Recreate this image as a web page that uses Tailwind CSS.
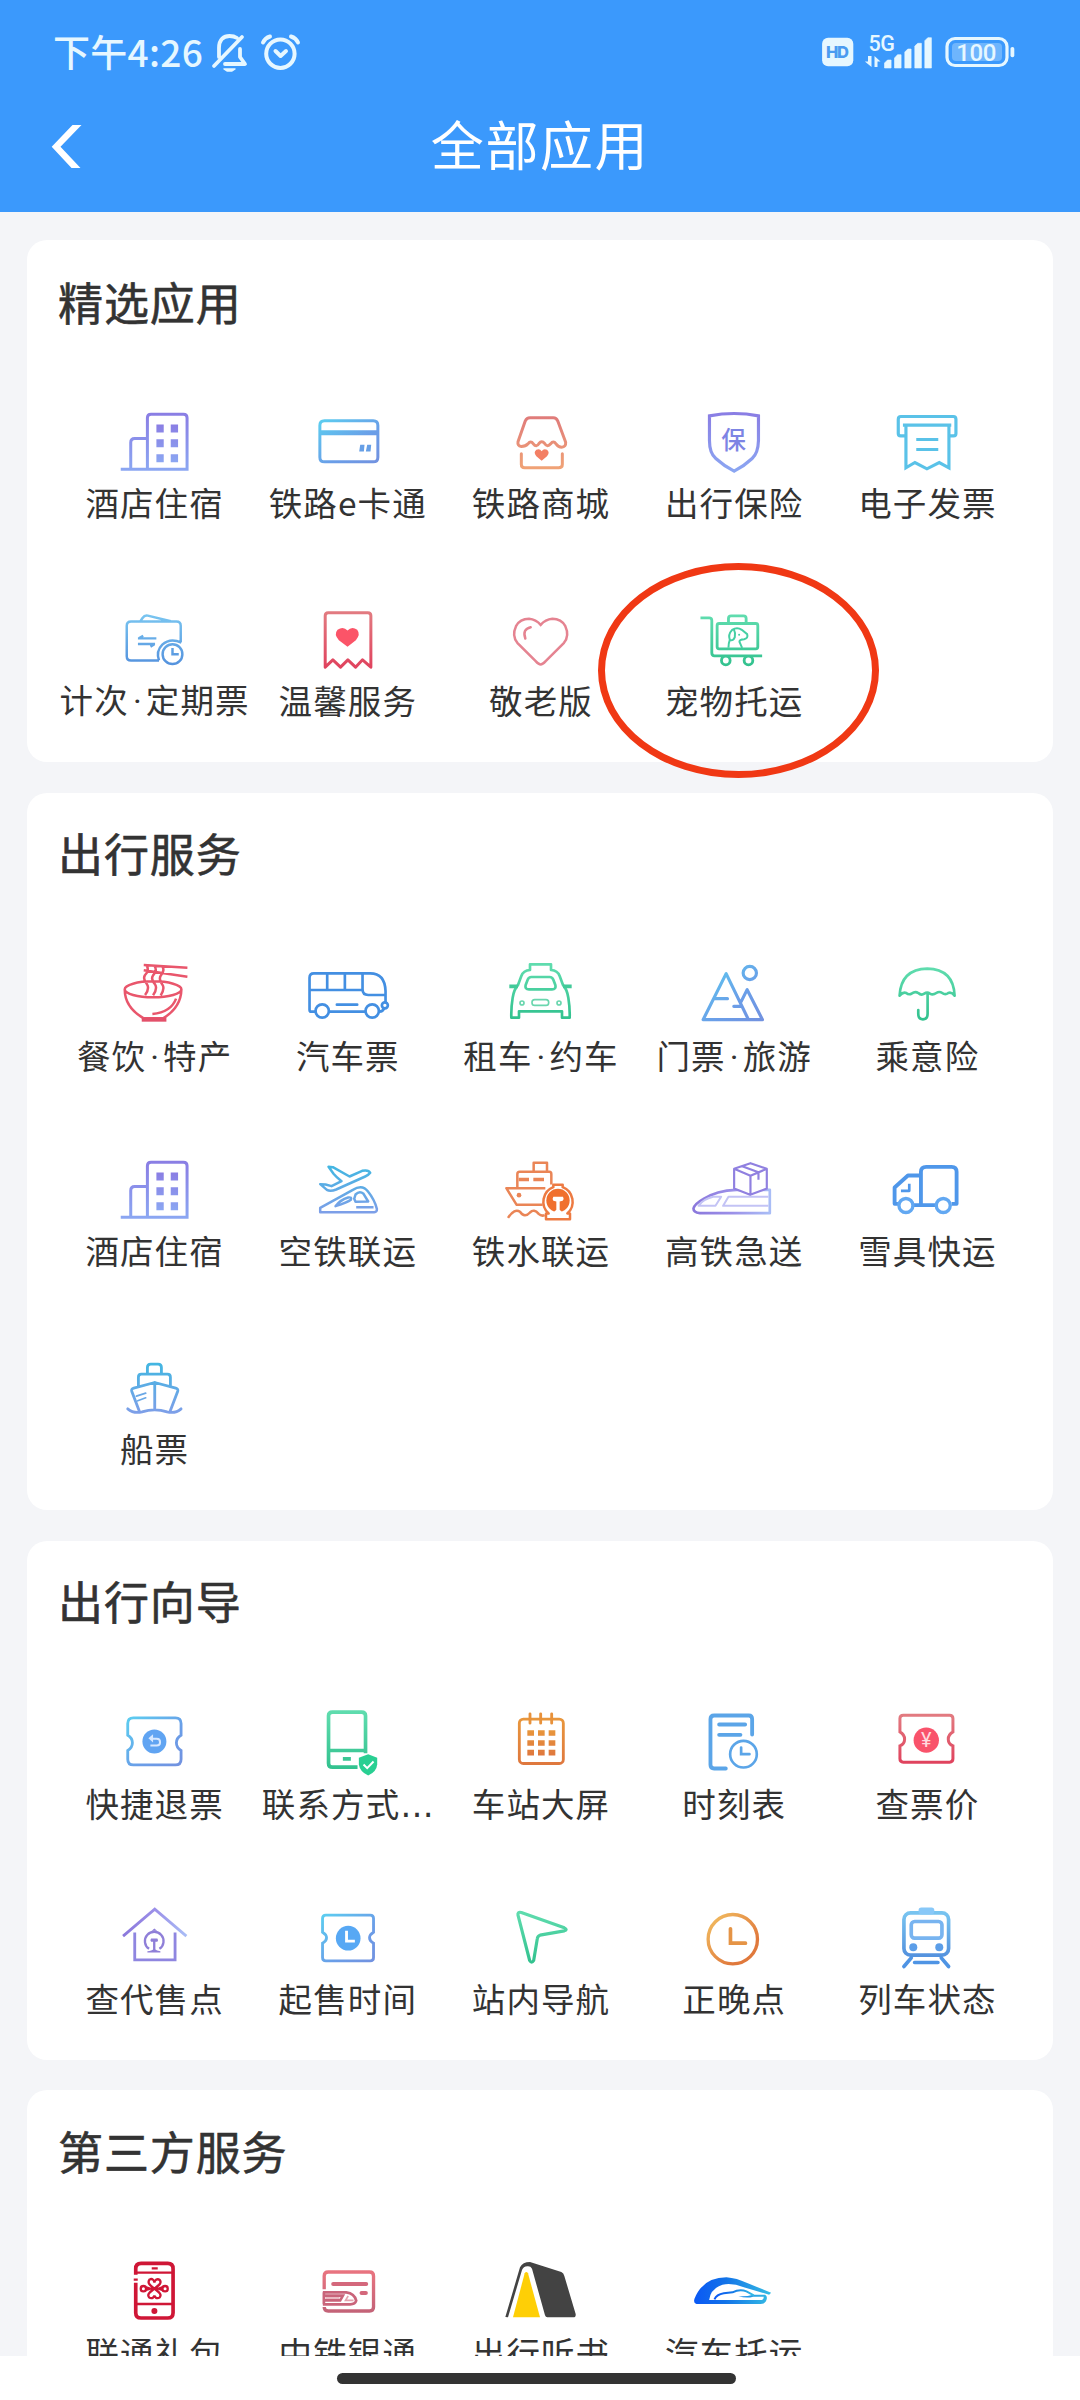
<!DOCTYPE html>
<html lang="zh-CN">
<head>
<meta charset="utf-8">
<title>全部应用</title>
<script src="https://cdn.jsdelivr.net/npm/@tailwindcss/browser@4"></script>
</head>
<body class="relative h-[2400px] w-[1080px] overflow-hidden bg-white font-['Noto_Sans_CJK_SC',sans-serif] text-[#333]">

<!-- shared gradients -->
<svg class="absolute h-0 w-0" aria-hidden="true">
  <defs>
    <linearGradient id="purple" x1="0" y1="0" x2="0" y2="1"><stop stop-color="#8a7ee4"/><stop offset="1" stop-color="#8ba6f2"/></linearGradient>
    <linearGradient id="purpleH"><stop stop-color="#8b78dc"/><stop offset=".5" stop-color="#9b8fe8"/><stop offset="1" stop-color="#a9bdf6"/></linearGradient>
    <linearGradient id="cyan" x1="0" y1="0" x2="1" y2="1"><stop stop-color="#5ccdf0"/><stop offset=".6" stop-color="#6a9ee8"/><stop offset="1" stop-color="#7292e0"/></linearGradient>
    <linearGradient id="sky" x1="0" y1="0" x2="0" y2="1"><stop stop-color="#43b6e2"/><stop offset="1" stop-color="#7d9fe8"/></linearGradient>
    <linearGradient id="blue" x1="0" y1="0" x2="0" y2="1"><stop stop-color="#78c4f0"/><stop offset="1" stop-color="#5593de"/></linearGradient>
    <linearGradient id="peach" x1="0" y1="0" x2="0" y2="1"><stop stop-color="#e07c7a"/><stop offset="1" stop-color="#f0a276"/></linearGradient>
    <linearGradient id="red" x1="0" y1="0" x2="0" y2="1"><stop stop-color="#e27a80"/><stop offset="1" stop-color="#e0435e"/></linearGradient>
    <linearGradient id="green" x1="0" y1="0" x2="0" y2="1"><stop stop-color="#5fdcae"/><stop offset="1" stop-color="#33c28f"/></linearGradient>
    <linearGradient id="orange" x1="0" y1="0" x2="0" y2="1"><stop stop-color="#e8963c"/><stop offset="1" stop-color="#df783e"/></linearGradient>
    <linearGradient id="amber" x1="0" y1="0" x2="1" y2="1"><stop stop-color="#f2c062"/><stop offset=".75" stop-color="#e0793c"/></linearGradient>
    <linearGradient id="rose" x1="0" y1="0" x2="0" y2="1"><stop stop-color="#e87480"/><stop offset="1" stop-color="#c46378"/></linearGradient>
    <linearGradient id="ocean"><stop stop-color="#0a58f5"/><stop offset=".4" stop-color="#1272e8"/><stop offset="1" stop-color="#35bde4"/></linearGradient>
  </defs>
</svg>

<header class="h-[212px] bg-[#3b99fc] text-white">
  <div class="flex h-[104px] items-center justify-between pl-[53px] pr-[64px] text-[#e6f7ff]">
    <div class="flex items-center">
      <span class="-mt-[3px] w-[150px] whitespace-nowrap text-[37px] font-medium leading-[40px] tracking-[.3px]">下午4:26</span>
      <svg class="mt-[1px] h-[40px] w-[100px]" viewBox="203 33 100 40" fill="none" stroke="#e6f7ff" stroke-width="3.8" stroke-linecap="round" stroke-linejoin="round">
        <path d="M214 66L242 37M219 57V48C219 39 224 36 229.500 36Q234 36 237 38M240 49V57L245 64H225"/><path d="M224 69H235L232 71H227Z" stroke-width="1.500" fill="#e6f7ff"/>
        <circle cx="280.400" cy="53.700" r="14.200" stroke-width="4"/><path d="M275.500 51L280.600 56L286 51M263 42.500Q265 38 270 36.500M291 36.500Q296 38 298 42.500" stroke-width="4"/>
      </svg>
    </div>
    <svg class="h-[40px] w-[194px]" viewBox="822.500 32 194 40" fill="#e6f7ff">
      <rect x="822.600" y="37.700" width="31.200" height="28.600" rx="6"/>
      <text x="838" y="58" text-anchor="middle" font-family="Inter" font-weight="800" font-size="16.500" textLength="23" fill="#4b9bf0">HD</text>
      <text x="869" y="50.500" font-family="Roboto" font-size="21.500" font-weight="500" textLength="26.500">5G</text>
      <path d="M868.500 56H872V67L865.400 61.500H868.500ZM875 56L881 61.500H878V67H875Z"/>
      <path d="M885 63L888 60H891.600V68H885ZM895 58L898 54.700H901.600V68H895ZM905.300 52L908.300 49H911.600V68H905.300ZM915.300 46L918.300 43.300H921.900V68H915.300ZM925.300 40.700L928.300 37.700H931.900V68H925.300Z" stroke="#e6f7ff" stroke-width=".6" stroke-linejoin="round"/>
      <rect x="947.500" y="38.500" width="60" height="27" rx="8" fill="none" stroke="#e6f7ff" stroke-width="3.200"/>
      <rect x="952.500" y="43" width="50" height="18" rx="4" fill-opacity=".3"/>
      <rect x="1011" y="47" width="3.800" height="10.300" rx="1.800"/>
      <text x="976.800" y="60.800" text-anchor="middle" font-family="Roboto" font-size="24" font-weight="500" textLength="40">100</text>
    </svg>
  </div>
  <div class="grid h-[84px] grid-cols-[120px_1fr_120px] items-center">
    <svg class="ml-[50px] h-[44px] w-[34px]" viewBox="50 124 34 44"><path d="M72.500 125H81.500L60.500 146.700L80.500 168H71.500L51.700 146.700Z" fill="#fff"/></svg>
    <h1 class="-mt-[6px] text-center text-[53px] leading-[60px] tracking-[1.600px]">全部应用</h1>
  </div>
</header>

<main class="flex h-[2144px] flex-col overflow-hidden bg-[#f4f5f8] px-[27px] pt-[28px]">

  <section class="mb-[31px] h-[522px] shrink-0 rounded-[20px] bg-white px-[30px] pt-[30px]">
    <h2 class="mb-[70px] h-[64px] pl-[1px] text-[45px] leading-[64px] tracking-[.9px] [-webkit-text-stroke:0.6px_#333]">精选应用</h2>
    <ul class="grid grid-cols-5 grid-rows-[198px_120px] text-[33.500px] leading-[40px] tracking-[1.100px] whitespace-nowrap">
      <li class="flex flex-col items-center"><svg class="h-[80px] w-[100px]" viewBox="190.800 40.500 300 240" fill="none" stroke="url(#purple)" stroke-width="9"><path d="M241 236H440V82Q440 71 429 71H332Q321 71 321 82V236M321 144H283Q271 144 271 156V232"/><path stroke="none" fill="url(#purple)" d="M348 102h22v24h-22zM391 102h22v24h-22zM348 146h22v24h-22zM391 146h22v24h-22zM348 191h22v24h-22zM391 191h22v24h-22z"/></svg><span class="-mt-[2px] pl-[2px]">酒店住宿</span></li>
      <li class="flex flex-col items-center"><svg class="h-[80px] w-[100px]" viewBox="770.400 40.500 300 240" fill="none" stroke="url(#cyan)" stroke-width="9"><path d="M853 91H999Q1013 91 1013 105V200Q1013 214 999 214H853Q839 214 839 200V105Q839 91 853 91ZM839 124H1013M839 130H1013"/><path stroke="none" fill="#669fe6" d="M960 163h13l-2 20h-14zM981 163h12l-2 20h-14z"/></svg><span class="-mt-[2px] pl-[2px]">铁路e卡通</span></li>
      <li class="flex flex-col items-center"><svg class="h-[80px] w-[100px]" viewBox="1350 40.500 300 240" fill="none" stroke="url(#peach)" stroke-width="9" stroke-linejoin="round" stroke-linecap="round"><path d="M1470 82H1540Q1549 82 1553 91L1577 155Q1578 170 1565 170Q1555 170 1548 160Q1540 149 1532 160Q1522 172 1514 159Q1505 149 1497 159Q1489 172 1480 160Q1472 149 1464 160Q1457 168 1444 168Q1432 166 1434 154L1456 91Q1460 82 1470 82ZM1444 190V222Q1444 232 1454 232H1556Q1567 232 1567 222V190"/><path stroke="none" fill="#f37f64" d="M1505 211L1489 197Q1479 186 1489 178Q1499 173 1505 182Q1511 173 1521 178Q1531 186 1521 197Z"/></svg><span class="-mt-[2px] pl-[2px]">铁路商城</span></li>
      <li class="flex flex-col items-center"><svg class="h-[80px] w-[100px]" viewBox="429.600 40.500 300 240" fill="none" stroke="url(#purple)" stroke-width="9.500"><path d="M583 69Q546 69 509 76V150Q509 188 528 204Q552 226 583 242Q614 226 637 204Q655 188 656 150V76Q620 69 583 69Z"/><text x="581" y="176" text-anchor="middle" font-size="74" font-weight="500" letter-spacing="0" stroke="none" fill="#7d84e4">保</text></svg><span class="-mt-[2px] pl-[2px]">出行保险</span></li>
      <li class="flex flex-col items-center"><svg class="h-[80px] w-[100px]" viewBox="1009.200 40.500 300 240" fill="none" stroke="#5ac2e8" stroke-width="9.500"><path d="M1097 136H1083Q1076 136 1076 129V86Q1076 78 1084 78H1241Q1249 78 1249 86V129Q1249 136 1242 136H1229M1090 104H1235M1099 104V232L1126 216L1162 235L1199 216L1228 232V104M1130 147H1196M1130 177H1196"/></svg><span class="-mt-[2px] pl-[2px]">电子发票</span></li>

      <li class="flex flex-col items-center"><svg class="h-[80px] w-[100px]" viewBox="190.800 634.500 300 240" fill="none" stroke="url(#blue)" stroke-width="7.500"><path d="M356 812H271Q258 812 258 799V707Q258 694 271 694H409Q422 694 422 707V756M300 692L306 683Q312 674 322 676L392 693M292 745H348M296 744L308 737M292 762H344M342 763L330 770M356 812Q346 784 366 764Q390 742 424 758M427 793A30 30 0 1 1 367 793A30 30 0 1 1 427 793M397 774V793H416"/></svg><span class="-mt-[2px] pl-[2px]">计次<i class="inline-block w-[17px] text-center font-['Roboto'] not-italic tracking-normal">·</i>定期票</span></li>
      <li class="flex flex-col items-center"><svg class="h-[80px] w-[100px]" viewBox="770.400 634.500 300 240" fill="none" stroke="url(#red)" stroke-width="9" stroke-linejoin="round"><path d="M855 830V676Q855 667 864 667H983Q992 667 992 676V830L967 808L946 830L923 808L901 830L878 808Z"/><path stroke="none" fill="#fb5468" d="M922 769L896 749Q880 732 892 718Q909 706 922 720Q935 706 951 718Q962 732 947 749Z"/></svg><span class="-mt-[2px] pl-[2px]">温馨服务</span></li>
      <li class="flex flex-col items-center"><svg class="h-[80px] w-[100px]" viewBox="1350 634.500 300 240" fill="none" stroke="#e58391" stroke-width="7.500" stroke-linecap="round"><path d="M1502 822Q1496 822 1487 812L1432 757Q1415 735 1428 707Q1440 685 1467 685Q1488 687 1502 703Q1516 687 1537 685Q1564 685 1576 707Q1589 735 1572 757L1517 812Q1508 822 1502 822ZM1472 710Q1446 716 1456 744"/></svg><span class="-mt-[2px] pl-[2px]">敬老版</span></li>
      <li class="flex flex-col items-center"><svg class="h-[80px] w-[100px]" viewBox="429.600 634.500 300 240" fill="none" stroke="url(#green)" stroke-width="8.500"><path d="M482 682H508Q516 682 516 690V787Q516 796 524 796H667M538 699H648Q654 699 654 705V769Q654 775 648 775H538Q532 775 532 769V705Q532 699 538 699ZM566 698V684Q566 676 574 676H611Q619 676 619 684V698M571 810A13 13 0 1 1 545 810A13 13 0 1 1 571 810M639 810A13 13 0 1 1 613 810A13 13 0 1 1 639 810"/><path stroke="#45cfa4" stroke-width="6" d="M566 772Q566 758 570 748Q564 732 577 718Q592 708 606 718L622 731Q626 743 613 746Q599 746 599 754L607 772M570 748Q581 752 585 740Q588 728 582 716"/><circle cx="598" cy="733" r="3" fill="#45cfa4" stroke="none"/></svg><span class="-mt-[2px] pl-[2px]">宠物托运</span></li>
    </ul>
  </section>

  <section class="mb-[31px] h-[717px] shrink-0 rounded-[20px] bg-white px-[30px] pt-[28px]">
    <h2 class="mb-[72px] h-[64px] pl-[1px] text-[45px] leading-[64px] tracking-[.9px] [-webkit-text-stroke:0.6px_#333]">出行服务</h2>
    <ul class="grid grid-cols-5 grid-rows-[195px_198px_120px] text-[33.500px] leading-[40px] tracking-[1.100px] whitespace-nowrap">
      <li class="flex flex-col items-center"><svg class="h-[80px] w-[100px]" viewBox="190.800 408 300 240" fill="none" stroke="url(#red)" stroke-width="7.500"><path stroke="#e9566c" d="M253 505A85 24 0 0 1 423 505A85 24 0 0 1 253 505ZM253 505Q253 560 310 592H368Q422 560 423 505M310 432L441 440M310 448L441 467M318 433Q328 447 314 462Q306 474 320 490Q328 503 314 522M342 434Q352 448 338 463Q330 475 344 490Q352 503 338 523M366 436Q374 450 361 464Q354 476 366 491Q374 503 361 523M336 579Q392 574 407 533"/><path stroke="none" fill="#e3506a" d="M304 590H378V602H304Z"/></svg><span class="-mt-[2px] pl-[2px]">餐饮<i class="inline-block w-[17px] text-center font-['Roboto'] not-italic tracking-normal">·</i>特产</span></li>
      <li class="flex flex-col items-center"><svg class="h-[80px] w-[100px]" viewBox="770.400 408 300 240" fill="none" stroke="#438fe2" stroke-width="8" stroke-linecap="round"><path d="M826 572H813Q808 572 808 566V470Q808 457 821 457H990Q1034 457 1036 510V543M1032 562Q1028 572 1018 572M867 572H974M808 507H966M861 457V507M914 457V507M967 457V505Q967 522 984 522H1036M890 551H951"/><circle cx="846" cy="570" r="20"/><circle cx="996" cy="570" r="20"/><circle cx="1034" cy="553" r="9"/></svg><span class="-mt-[2px] pl-[2px]">汽车票</span></li>
      <li class="flex flex-col items-center"><svg class="h-[80px] w-[100px]" viewBox="1350 408 300 240" fill="none" stroke="url(#green)" stroke-width="8" stroke-linejoin="round"><path d="M1470 447V430H1533V447Q1553 448 1559 465L1569 492Q1581 505 1585 530Q1590 560 1589 590H1566V571H1437V590H1414Q1413 560 1418 530Q1422 505 1434 492L1444 465Q1450 448 1470 447ZM1474 468H1529Q1537 468 1540 476L1546 492Q1549 505 1536 505H1467Q1454 505 1457 492L1463 476Q1466 468 1474 468Z"/><path stroke="#41ca99" stroke-width="11" d="M1408 496H1434M1569 496H1595"/><g stroke="#6ad6ae" stroke-width="5"><circle cx="1446" cy="546" r="6"/><circle cx="1557" cy="546" r="6"/><rect x="1476" y="536" width="50" height="17" rx="8"/></g></svg><span class="-mt-[2px] pl-[2px]">租车<i class="inline-block w-[17px] text-center font-['Roboto'] not-italic tracking-normal">·</i>约车</span></li>
      <li class="flex flex-col items-center"><svg class="h-[80px] w-[100px]" viewBox="429.600 48 300 240" fill="none" stroke="url(#cyan)" stroke-width="9.500" stroke-linejoin="round" stroke-linecap="round"><path d="M626 236L559 98L490 236H668L622 146L604 182M526 173H563M582 196H606M650 96A20 20 0 1 1 610 96A20 20 0 1 1 650 96"/></svg><span class="-mt-[2px] pl-[2px]">门票<i class="inline-block w-[17px] text-center font-['Roboto'] not-italic tracking-normal">·</i>旅游</span></li>
      <li class="flex flex-col items-center"><svg class="h-[80px] w-[100px]" viewBox="1009.200 48 300 240" fill="none" stroke="url(#green)" stroke-width="8" stroke-linecap="round" stroke-linejoin="round"><path d="M1080 164Q1084 85 1163 83Q1242 85 1245 164Q1236 152 1226 156Q1217 163 1208 156Q1199 150 1190 156Q1180 163 1171 158Q1163 152 1154 158Q1145 164 1136 156Q1127 150 1117 157Q1108 163 1100 156Q1090 152 1080 164ZM1164 158V218Q1164 235 1150 235Q1136 235 1136 218V207"/></svg><span class="-mt-[2px] pl-[2px]">乘意险</span></li>

      <li class="flex flex-col items-center"><svg class="h-[80px] w-[100px]" viewBox="190.800 40.500 300 240" fill="none" stroke="url(#purple)" stroke-width="9"><path d="M241 236H440V82Q440 71 429 71H332Q321 71 321 82V236M321 144H283Q271 144 271 156V232"/><path stroke="none" fill="url(#purple)" d="M348 102h22v24h-22zM391 102h22v24h-22zM348 146h22v24h-22zM391 146h22v24h-22zM348 191h22v24h-22zM391 191h22v24h-22z"/></svg><span class="-mt-[2px] pl-[2px]">酒店住宿</span></li>
      <li class="flex flex-col items-center"><svg class="h-[80px] w-[100px]" viewBox="770.400 64.500 300 240" fill="none" stroke="url(#sky)" stroke-width="7.500" stroke-linejoin="round"><path d="M865 109L878 110L928 138L966 121Q985 117 990 127Q985 134 975 138L888 177Q870 184 860 178L840 161L856 162L874 167L904 152Q888 140 880 130ZM840 245V232L938 178Q967 160 984 184Q1003 208 1010 235Q1011 245 1002 245ZM942 205L946 192Q958 180 970 190L984 213L946 214ZM886 227Q900 208 924 201Q936 199 932 208Q922 216 886 227ZM948 230H1000"/></svg><span class="-mt-[2px] pl-[2px]">空铁联运</span></li>
      <li class="flex flex-col items-center"><svg class="h-[80px] w-[100px]" viewBox="1350 64.500 300 240" fill="none" stroke="#ea8556" stroke-width="7.500" stroke-linejoin="round"><path d="M1481 123V97H1521V123M1432 170V131Q1432 124 1439 124H1528Q1534 124 1534 131V162M1516 173H1399L1430 223H1508M1404 262Q1424 232 1440 244Q1454 264 1470 246Q1482 234 1496 250Q1504 258 1514 254"/><path stroke-width="10" d="M1436 147H1467M1480 147H1512"/><circle cx="1437" cy="194" r="7" fill="#ea8556" stroke="none"/><path stroke="#ed7a42" fill="#fff" d="M1540 170V163H1568V170A47 47 0 0 1 1582 249H1590V266H1518V249H1526A47 47 0 0 1 1540 170Z"/><circle cx="1554" cy="210" r="35" fill="#f0702e" stroke="none"/><path fill="#fff" stroke="none" d="M1540 199H1569Q1573 205 1568 211L1559 213V238L1570 248V254H1538V248L1549 238V213L1540 211Q1536 205 1540 199Z"/></svg><span class="-mt-[2px] pl-[2px]">铁水联运</span></li>
      <li class="flex flex-col items-center"><svg class="h-[80px] w-[100px]" viewBox="429.600 634.500 300 240" fill="none" stroke="url(#purpleH)" stroke-width="8" stroke-linejoin="round"><path d="M690 748V818H480Q461 816 461 804Q465 790 490 776Q530 750 590 748Z"/><path stroke="#c3c3f5" stroke-width="6" d="M520 769H544L527 796H476Q490 776 520 769ZM686 769H566L550 796H686"/><path stroke="#9080e0" stroke-width="6.500" fill="#fff" d="M632 668L583 685V744L631 763L681 744V685ZM583 685L632 706L681 685M632 706V763M607 677L656 695V718"/></svg><span class="-mt-[2px] pl-[2px]">高铁急送</span></li>
      <li class="flex flex-col items-center"><svg class="h-[80px] w-[100px]" viewBox="1009.200 634.500 300 240" fill="none" stroke="#4f97ea" stroke-width="11.500" stroke-linejoin="round"><path d="M1075 790H1065V741L1105 705H1142M1144 794V694Q1144 679 1160 679H1236Q1251 679 1251 694V790H1236M1123 794H1187"/><path stroke-width="8" d="M1109 730V751H1084"/><circle cx="1099" cy="795" r="21" stroke="#62a8f2" stroke-width="10"/><circle cx="1211" cy="795" r="21" stroke="#62a8f2" stroke-width="10"/></svg><span class="-mt-[2px] pl-[2px]">雪具快运</span></li>

      <li class="flex flex-col items-center"><svg class="h-[80px] w-[100px]" viewBox="190.800 658.500 300 240" fill="none" stroke="url(#sky)" stroke-width="8.500" stroke-linecap="round" stroke-linejoin="round"><path d="M321 728V711Q321 701 331 701H353Q363 701 363 711V728M294 766V740Q294 731 303 731H381Q390 731 390 740V766M296 840L274 782Q272 775 280 773L343 756L406 773Q414 775 412 782L390 840M343 756V838M262 835Q280 850 305 844Q343 832 380 844Q405 850 422 835"/><path stroke="#6aa8e6" stroke-width="5" d="M288 797L316 788M292 811L316 802"/></svg><span class="-mt-[2px] pl-[2px]">船票</span></li>
    </ul>
  </section>

  <section class="mb-[30px] h-[519px] shrink-0 rounded-[20px] bg-white px-[30px] pt-[28px]">
    <h2 class="mb-[72px] h-[64px] pl-[1px] text-[45px] leading-[64px] tracking-[.9px] [-webkit-text-stroke:0.6px_#333]">出行向导</h2>
    <ul class="grid grid-cols-5 grid-rows-[195px_120px] text-[33.500px] leading-[40px] tracking-[1.100px] whitespace-nowrap">
      <li class="flex flex-col items-center"><svg class="h-[80px] w-[100px]" viewBox="190.800 433.500 300 240" fill="none" stroke="url(#cyan)" stroke-width="8.500"><path d="M279 472H405Q422 472 422 489V524Q408 532 408 547Q408 562 422 570V596Q422 613 405 613H279Q262 613 262 596V570Q276 562 276 547Q276 532 262 524V489Q262 472 279 472Z"/><circle cx="342" cy="543" r="36" fill="#60a4f2" stroke="none"/><path stroke="#d6e8ff" stroke-width="6" d="M330 535H349Q359 535 359 545T349 555H330"/><path fill="#d6e8ff" stroke="none" d="M338 521V546L324 533Z"/></svg><span class="-mt-[2px] pl-[2px]">快捷退票</span></li>
      <li class="flex flex-col items-center"><svg class="h-[80px] w-[100px]" viewBox="770.400 433.500 300 240" fill="none" stroke="url(#green)" stroke-width="11"><path d="M952 620H877Q865 620 865 608V466Q865 455 877 455H964Q976 455 976 466V578M865 570H976M908 595H932"/><path stroke="none" fill="#29cf92" d="M984 581L1011 592V612Q1009 634 984 645Q959 634 956 612V592Z"/><path stroke="#fff" stroke-width="6" d="M970 612L981 623L1000 603"/></svg><span class="-mt-[2px] pl-[2px]">联系方式<i class="font-['DejaVu_Sans'] not-italic tracking-normal">…</i></span></li>
      <li class="flex flex-col items-center"><svg class="h-[80px] w-[100px]" viewBox="1350 433.500 300 240" fill="none" stroke="url(#orange)" stroke-width="8.500"><rect x="1438" y="476" width="132" height="133" rx="12"/><path stroke="#e8913a" stroke-linecap="round" d="M1470 460V488M1502 460V488M1535 460V488"/><path stroke="none" fill="url(#orange)" d="M1462 509h20v17h-20zM1494 509h20v17h-20zM1526 509h20v17h-20zM1462 539h20v17h-20zM1494 539h20v17h-20zM1526 539h20v17h-20zM1462 568h20v17h-20zM1494 568h20v17h-20zM1526 568h20v17h-20z"/></svg><span class="-mt-[2px] pl-[2px]">车站大屏</span></li>
      <li class="flex flex-col items-center"><svg class="h-[80px] w-[100px]" viewBox="429.600 43.500 300 240" fill="none" stroke="#5ba5e8" stroke-width="11.500" stroke-linecap="round"><path d="M558 234H523Q512 234 512 223V86Q512 75 523 75H627Q637 75 637 86V132M538 102H616M538 133H602"/><path stroke-width="8" d="M651 191A40 40 0 1 1 571 191A40 40 0 1 1 651 191M604 171V191H629"/></svg><span class="-mt-[2px] pl-[2px]">时刻表</span></li>
      <li class="flex flex-col items-center"><svg class="h-[80px] w-[100px]" viewBox="1009.200 43.500 300 240" fill="none" stroke="url(#red)" stroke-width="9"><path d="M1091 74H1230Q1240 74 1240 84V124Q1226 132 1226 146Q1226 160 1240 166V205Q1240 215 1230 215H1091Q1081 215 1081 205V166Q1095 160 1095 146Q1095 132 1081 124V84Q1081 74 1091 74Z"/><circle cx="1160" cy="149" r="38" fill="#f9536b" stroke="none"/><text x="1160" y="170" text-anchor="middle" font-family="Roboto" font-size="60" letter-spacing="0" stroke="none" fill="#ffd9de">¥</text></svg><span class="-mt-[2px] pl-[2px]">查票价</span></li>

      <li class="flex flex-col items-center"><svg class="h-[80px] w-[100px]" viewBox="190.800 58.500 300 240" fill="none" stroke="url(#purpleH)" stroke-width="8.500"><path d="M248 167L343 86L438 167"/><path stroke="#8f86e0" d="M283 156V238H404V156"/><path stroke="#8f7fd8" stroke-width="7" d="M326 205A28 28 0 1 1 357 205"/><path fill="#8f7fd8" stroke="none" d="M332 174H351Q355 179 351 184H345V207Q348 211 360 212V216H321V212Q335 211 338 207V184H332Q328 179 332 174ZM334 151L342 144L350 151Z"/></svg><span class="-mt-[2px] pl-[2px]">查代售点</span></li>
      <li class="flex flex-col items-center"><svg class="h-[80px] w-[100px]" viewBox="770.400 58.500 300 240" fill="none" stroke="url(#cyan)" stroke-width="8.500"><path d="M857 104H990Q1000 104 1000 114V155Q988 162 988 172Q988 182 1000 188V231Q1000 241 990 241H857Q847 241 847 231V188Q859 182 859 172Q859 162 847 155V114Q847 104 857 104Z"/><circle cx="924" cy="173" r="37" fill="#57a8f4" stroke="none"/><path stroke="#fff" d="M919 151V182H944"/></svg><span class="-mt-[2px] pl-[2px]">起售时间</span></li>
      <li class="flex flex-col items-center"><svg class="h-[80px] w-[100px]" viewBox="1350 58.500 300 240" fill="none" stroke="url(#green)" stroke-width="9.500" stroke-linejoin="round"><path d="M1434 104Q1432 93 1444 96L1573 142Q1584 147 1573 151L1500 164Q1493 166 1492 174L1481 240Q1475 250 1469 240Z"/></svg><span class="-mt-[2px] pl-[2px]">站内导航</span></li>
      <li class="flex flex-col items-center"><svg class="h-[80px] w-[100px]" viewBox="429.600 628.500 300 240" fill="none" stroke="url(#amber)" stroke-width="10"><circle cx="579" cy="746" r="74"/><path stroke="#e59446" stroke-width="11" stroke-linecap="round" d="M572 715V758H617"/></svg><span class="-mt-[2px] pl-[2px]">正晚点</span></li>
      <li class="flex flex-col items-center"><svg class="h-[80px] w-[100px]" viewBox="1009.200 628.500 300 240" fill="none" stroke="url(#blue)" stroke-width="11" stroke-linecap="round"><rect x="1093" y="667" width="134" height="127" rx="20"/><rect x="1137" y="651" width="47" height="20" rx="8" fill="#88c8f8" stroke="none"/><rect x="1115" y="693" width="92" height="50" rx="10" stroke="#78b4f0"/><g fill="#5c9ee8" stroke="none"><circle cx="1121" cy="770" r="12"/><circle cx="1199" cy="770" r="12"/></g><path stroke="#4f94e4" d="M1115 802L1093 828M1205 802L1227 828M1125 816H1195"/></svg><span class="-mt-[2px] pl-[2px]">列车状态</span></li>
    </ul>
  </section>

  <section class="h-[522px] shrink-0 rounded-[20px] bg-white px-[30px] pt-[29px]">
    <h2 class="mb-[71px] h-[64px] pl-[1px] text-[45px] leading-[64px] tracking-[.9px] [-webkit-text-stroke:0.6px_#333]">第三方服务</h2>
    <ul class="grid grid-cols-5 text-[33.500px] leading-[40px] tracking-[1.100px] whitespace-nowrap">
      <li class="flex flex-col items-center"><svg class="h-[80px] w-[100px]" viewBox="190.800 72 300 240" fill="none" stroke="#cf1636" stroke-width="11"><path d="M286 134V116Q286 100 302 100H382Q398 100 398 116V248Q398 264 382 264H302Q286 264 286 248V158"/><path stroke-width="7" d="M280 149H292M286 128H398M286 222H398M334 115H352"/><circle cx="342" cy="243" r="9" fill="#cf1636" stroke="none"/><g stroke-width="7"><circle cx="309" cy="176" r="8"/><circle cx="374" cy="176" r="8"/><path d="M328 148C336 144 342 152 342 158C342 152 350 144 358 150C366 160 352 168 342 176C332 184 318 192 326 202C334 208 342 202 342 196C342 202 350 208 358 202C366 192 352 184 342 176C332 168 318 160 328 148M317 172L330 176L317 180M366 172L354 176L366 180"/></g></svg><span class="-mt-[2px] pl-[2px]">联通礼包</span></li>
      <li class="flex flex-col items-center"><svg class="h-[80px] w-[100px]" viewBox="770.400 72 300 240" fill="none" stroke="url(#rose)" stroke-width="10"><path d="M852 178V138Q852 126 864 126H988Q1000 126 1000 138V231Q1000 243 988 243H864Q852 243 852 231"/><path stroke="#d4687c" stroke-width="12" stroke-linecap="round" d="M879 162H978M964 189H977"/><path stroke="#c9647a" stroke-width="8" d="M848 187H918Q943 190 948 212Q945 223 930 223H848M851 187V223M851 211H900L908 197H851"/><path stroke="#e4a3ae" stroke-width="5" d="M856 204H898M924 198L916 211H940"/></svg><span class="-mt-[2px] pl-[2px]">中铁银通</span></li>
      <li class="flex flex-col items-center"><svg class="h-[80px] w-[100px]" viewBox="1350 72 300 240"><path fill="#434343" d="M1396 261L1440 112Q1448 96 1470 96L1564 126Q1571 129 1573 138L1607 252Q1608 262 1600 262H1522Q1517 262 1515 256L1476 116Q1472 108 1462 109Q1450 110 1446 120L1404 262Z"/><path fill="#fecf06" d="M1454 130Q1459 122 1464 130L1500 262H1419Z"/></svg><span class="-mt-[2px] pl-[2px]">出行听书</span></li>
      <li class="flex flex-col items-center"><svg class="h-[80px] w-[100px]" viewBox="429.600 72 300 240"><path fill="url(#ocean)" d="M470 222Q460 220 464 206Q490 142 560 142Q590 144 624 160L694 188L688 194L612 172Q578 158 548 164Q512 176 508 210H662Q672 210 672 200H640Q620 206 596 198Q618 200 640 194H676Q684 198 680 210Q676 222 662 222Z"/><path fill="none" stroke="url(#ocean)" stroke-width="6" d="M524 208Q530 194 552 190L578 187Q600 176 620 184L642 196"/></svg><span class="-mt-[2px] pl-[2px]">汽车托运</span></li>
    </ul>
  </section>
</main>

<!-- system gesture bar -->
<footer class="h-[44px] bg-white pl-[337px] pt-[17px]"><div class="h-[11px] w-[399px] rounded-full bg-[#333]"></div></footer>

<!-- highlight ring round 宠物托运 -->
<div class="absolute left-[598px] top-[563px] h-[215px] w-[281px] rounded-[50%] border-[7px] border-[#f03814]"></div>

</body>
</html>
